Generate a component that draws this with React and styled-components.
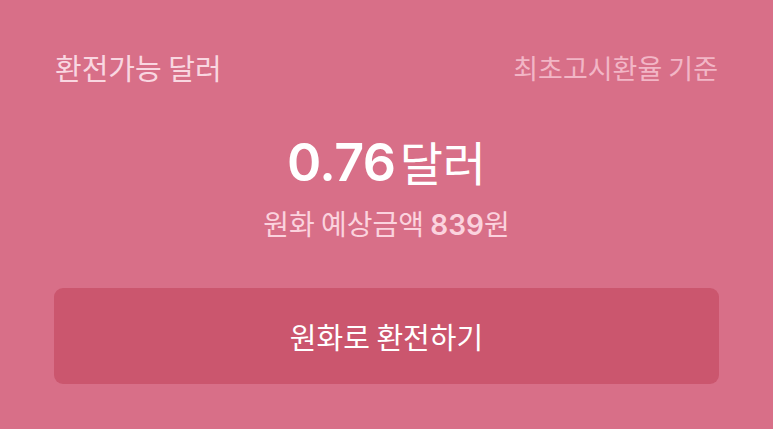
import React from 'react';
import styled, { createGlobalStyle } from 'styled-components';

const Global = createGlobalStyle`
  html, body {
    margin: 0;
    padding: 0;
    background: #d86f88;
  }
  body {
    font-family: "Noto Sans CJK KR", "Noto Sans", sans-serif;
  }
`;

const Page = styled.div`
  width: 773px;
  height: 429px;
  box-sizing: border-box;
  padding: 45px 54px 0 54px;
  background: #d86f88;
  display: flex;
  flex-direction: column;
`;

const TopRow = styled.div`
  display: flex;
  justify-content: space-between;
  align-items: center;
  height: 44px;
  padding: 0 1px;
`;

const Label = styled.span`
  font-size: ${p => (p.dim ? '27px' : '29px')};
  color: ${p => (p.dim ? '#f2b6c6' : '#f9d7e1')};
`;

const Amount = styled.div`
  margin-top: 40px;
  display: flex;
  justify-content: center;
  align-items: baseline;
  color: #ffffff;
  line-height: 64px;
`;

const Number = styled.span`
  font-family: "Inter", "Noto Sans", sans-serif;
  font-weight: 600;
  font-size: 52px;
  letter-spacing: -0.5px;
`;

const Unit = styled.span`
  font-size: 47px;
  font-weight: 400;
  margin-left: 4px;
`;

const Estimate = styled.div`
  margin-top: 6px;
  text-align: center;
  font-size: 28px;
  color: #fbd3de;
  line-height: 44px;
`;

const Strong = styled.span`
  font-family: "Inter", "Noto Sans", sans-serif;
  font-weight: 600;
`;

const Button = styled.button`
  margin-top: 41px;
  height: 96px;
  width: 100%;
  border: none;
  border-radius: 9px;
  background: #cb566e;
  color: #ffffff;
  font-family: "Noto Sans CJK KR", "Noto Sans", sans-serif;
  font-size: 29px;
  cursor: pointer;
`;

export default function App() {
  return (
    <>
      <Global />
      <Page>
        <TopRow>
          <Label>환전가능 달러</Label>
          <Label dim>최초고시환율 기준</Label>
        </TopRow>
        <Amount>
          <Number>0.76</Number>
          <Unit>달러</Unit>
        </Amount>
        <Estimate>
          원화 예상금액 <Strong>839</Strong>원
        </Estimate>
        <Button>원화로 환전하기</Button>
      </Page>
    </>
  );
}
